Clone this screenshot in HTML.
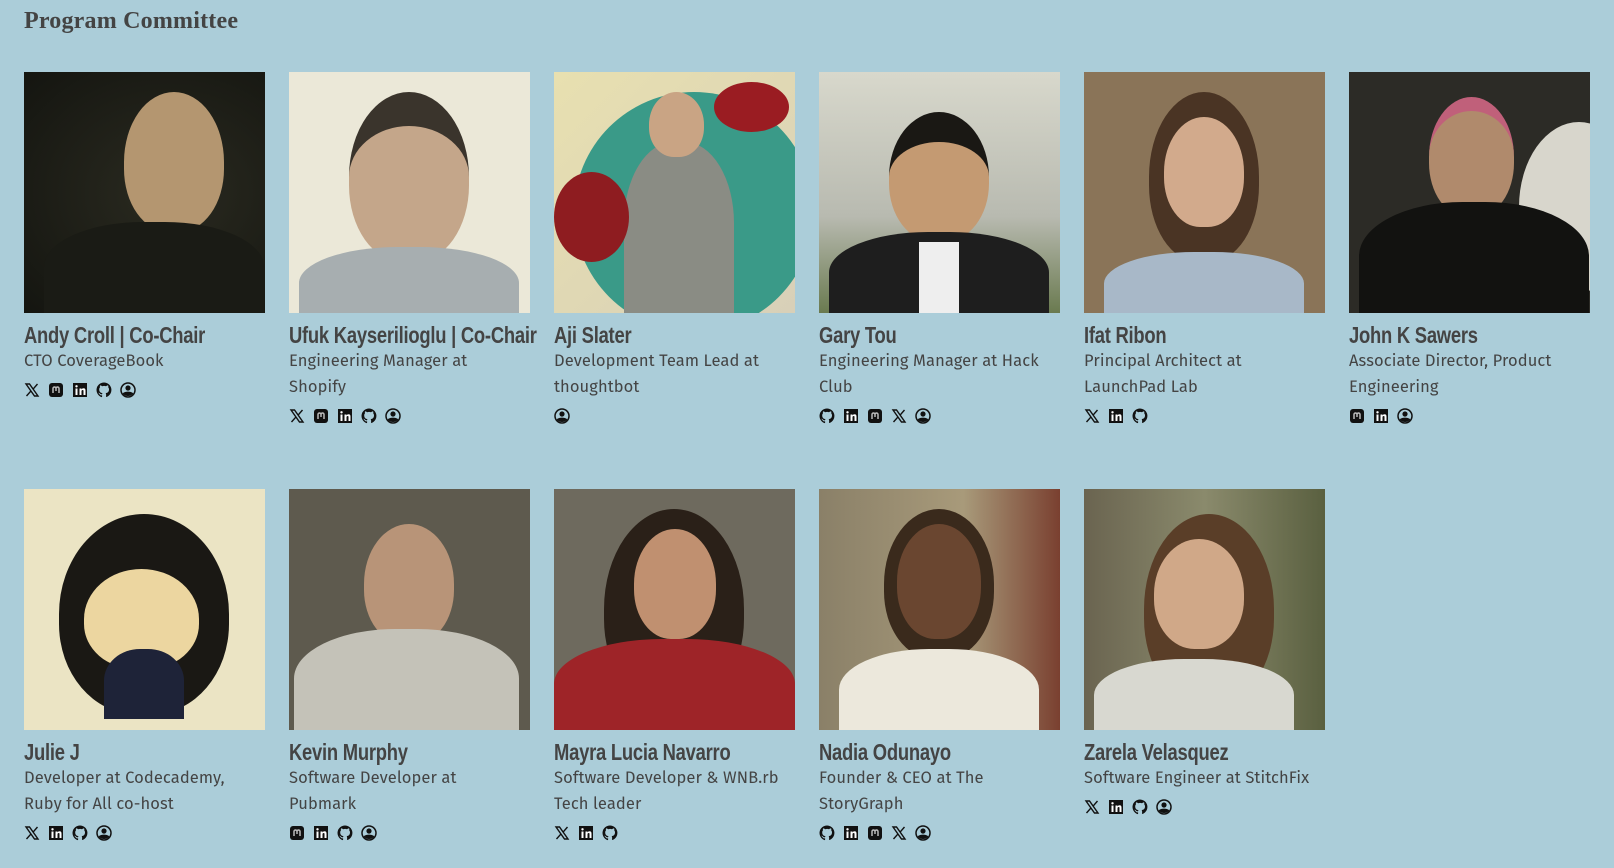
<!DOCTYPE html>
<html><head><meta charset="utf-8"><style>
*{margin:0;padding:0;box-sizing:border-box}
body{width:1614px;height:868px;background:#abcdd9;color:#444;font-family:"Fira Sans","DejaVu Sans","Liberation Sans",sans-serif;overflow:hidden;position:relative}
h2{position:absolute;left:24px;top:8px;font-family:"Liberation Serif",serif;font-weight:bold;font-size:24px;color:#444;letter-spacing:0.2px}
.card{position:absolute;width:245px}
.ph{width:241px;height:241px;position:relative;overflow:hidden}
.nm{font-family:"Liberation Sans Narrow","Liberation Sans",sans-serif;font-stretch:condensed;font-weight:bold;font-size:23px;line-height:26px;margin-top:9px;letter-spacing:-0.3px;transform:scaleX(.8);transform-origin:left;white-space:nowrap}
.ds{font-size:16.5px;line-height:26px;margin-top:1px;letter-spacing:.1px}
.ic{display:flex;gap:8px;margin-top:6px;height:18px;align-items:center}
.ic svg{width:16px;height:16px}
.face{position:absolute;border-radius:50% 50% 45% 45%}
.body{position:absolute;border-radius:45% 45% 0 0}
</style></head><body>
<svg width="0" height="0" style="position:absolute">
<defs>
<symbol id="x" viewBox="0 0 16 16"><path d="M2 2h3.5l8.5 12h-3.5z" fill="none" stroke="#111" stroke-width="1.4"/><path d="M13.5 2L9 7.2M2.5 14l4.6-5.2" stroke="#111" stroke-width="1.4"/></symbol>
<symbol id="m" viewBox="0 0 16 16"><rect x="1" y="1" width="14" height="14" rx="3" fill="#111"/><path d="M5 11V6.5a1.5 1.5 0 013 0V9M8 9V6.5a1.5 1.5 0 013 0V11" fill="none" stroke="#bbb" stroke-width="1.5"/></symbol>
<symbol id="l" viewBox="0 0 16 16"><rect x="1" y="1" width="14" height="14" fill="#111"/><rect x="3.5" y="6.5" width="2" height="6.5" fill="#fff"/><circle cx="4.5" cy="4.3" r="1.2" fill="#fff"/><path d="M7.5 13V6.5h2v1c.5-.8 1.3-1.2 2.2-1.2 1.2 0 1.8.8 1.8 2.3V13h-2V9c0-.7-.3-1-.8-1s-1.2.4-1.2 1.2V13z" fill="#fff"/></symbol>
<symbol id="g" viewBox="0 0 16 16"><path d="M8 .5a7.5 7.5 0 00-2.4 14.6c.4 0 .5-.2.5-.4v-1.4c-2.1.5-2.5-1-2.5-1-.4-.9-.9-1.1-.9-1.1-.7-.5 0-.5 0-.5.8 0 1.2.8 1.2.8.7 1.2 1.8.8 2.2.6 0-.5.3-.8.5-1-1.700-.2-3.4-.8-3.4-3.7 0-.8.3-1.5.8-2-.1-.2-.3-1 .1-2 0 0 .6-.2 2.1.8a7 7 0 013.8 0c1.4-1 2.1-.8 2.1-.8.4 1 .2 1.8.1 2 .5.5.8 1.2.8 2 0 2.9-1.8 3.5-3.4 3.7.3.2.5.7.5 1.4v2.1c0 .2.1.5.5.4A7.5 7.5 0 008 .5z" fill="#111"/></symbol>
<symbol id="p" viewBox="0 0 16 16"><circle cx="8" cy="8" r="7" fill="none" stroke="#111" stroke-width="1.5"/><circle cx="8" cy="6" r="2.6" fill="#111"/><path d="M2.6 11.5C4 10 6 9.6 8 9.6s4 .4 5.4 1.9A7 7 0 012.6 11.5z" fill="#111"/></symbol>
</defs></svg>
<h2>Program Committee</h2>

<div class="card" style="left:24px;top:72px">
<div class="ph" style="background:radial-gradient(ellipse at 60% 50%,#2a2a20,#141510)"><div class="face" style="left:100px;top:20px;width:100px;height:140px;background:#b49670"></div><div class="body" style="left:20px;top:150px;width:220px;height:100px;background:#1a1b15"></div></div>
<div class="nm">Andy Croll | Co-Chair</div><div class="ds">CTO CoverageBook</div>
<div class="ic"><svg><use href="#x"/></svg><svg><use href="#m"/></svg><svg><use href="#l"/></svg><svg><use href="#g"/></svg><svg><use href="#p"/></svg></div></div>

<div class="card" style="left:289px;top:72px">
<div class="ph" style="background:#ebe8d8"><div class="face" style="left:60px;top:20px;width:120px;height:170px;background:#c4a68a;border-top:34px solid #3a342c"></div><div class="body" style="left:10px;top:175px;width:220px;height:80px;background:#a7aeb0"></div></div>
<div class="nm">Ufuk Kayserilioglu | Co-Chair</div><div class="ds">Engineering Manager at<br>Shopify</div>
<div class="ic"><svg><use href="#x"/></svg><svg><use href="#m"/></svg><svg><use href="#l"/></svg><svg><use href="#g"/></svg><svg><use href="#p"/></svg></div></div>

<div class="card" style="left:554px;top:72px">
<div class="ph" style="background:linear-gradient(135deg,#e8e0b0,#d8d0b8)"><div style="position:absolute;left:20px;top:20px;width:240px;height:240px;border-radius:50%;background:#3a9a88"></div><div class="body" style="left:70px;top:70px;width:110px;height:180px;background:#8a8c84"></div><div class="face" style="left:95px;top:20px;width:55px;height:65px;background:#c9a484"></div><div style="position:absolute;left:0;top:100px;width:75px;height:90px;border-radius:50%;background:#8e1c20"></div><div style="position:absolute;left:160px;top:10px;width:75px;height:50px;border-radius:50%;background:#9a1c22"></div></div>
<div class="nm">Aji Slater</div><div class="ds">Development Team Lead at<br>thoughtbot</div>
<div class="ic"><svg><use href="#p"/></svg></div></div>

<div class="card" style="left:819px;top:72px">
<div class="ph" style="background:linear-gradient(#d8d8cc,#b8bab0 60%,#6a7a50)"><div class="face" style="left:70px;top:40px;width:100px;height:130px;background:#c49a72;border-top:30px solid #1a1814"></div><div class="body" style="left:10px;top:160px;width:220px;height:90px;background:#1e1e1e"></div><div style="position:absolute;left:100px;top:170px;width:40px;height:80px;background:#eee"></div></div>
<div class="nm">Gary Tou</div><div class="ds">Engineering Manager at Hack<br>Club</div>
<div class="ic"><svg><use href="#g"/></svg><svg><use href="#l"/></svg><svg><use href="#m"/></svg><svg><use href="#x"/></svg><svg><use href="#p"/></svg></div></div>

<div class="card" style="left:1084px;top:72px">
<div class="ph" style="background:#8a7458"><div class="face" style="left:65px;top:20px;width:110px;height:170px;background:#4a3424"></div><div class="face" style="left:80px;top:45px;width:80px;height:110px;background:#d2aa8c"></div><div class="body" style="left:20px;top:180px;width:200px;height:70px;background:#a8b8c8"></div></div>
<div class="nm">Ifat Ribon</div><div class="ds">Principal Architect at<br>LaunchPad Lab</div>
<div class="ic"><svg><use href="#x"/></svg><svg><use href="#l"/></svg><svg><use href="#g"/></svg></div></div>

<div class="card" style="left:1349px;top:72px">
<div class="ph" style="background:#2c2b26"><div style="position:absolute;left:170px;top:50px;width:120px;height:170px;border-radius:50%;background:#d8d6cc"></div><div class="face" style="left:80px;top:25px;width:85px;height:120px;background:#b08a6c;border-top:14px solid #c0607a"></div><div class="body" style="left:10px;top:130px;width:230px;height:120px;background:#121210"></div></div>
<div class="nm">John K Sawers</div><div class="ds">Associate Director, Product<br>Engineering</div>
<div class="ic"><svg><use href="#m"/></svg><svg><use href="#l"/></svg><svg><use href="#p"/></svg></div></div>

<div class="card" style="left:24px;top:489px">
<div class="ph" style="background:#ebe4c4"><div class="face" style="left:35px;top:25px;width:170px;height:200px;background:#1a1814"></div><div class="face" style="left:60px;top:80px;width:115px;height:100px;background:#ecd6a0"></div><div class="body" style="left:80px;top:160px;width:80px;height:70px;background:#1e2338"></div></div>
<div class="nm">Julie J</div><div class="ds">Developer at Codecademy,<br>Ruby for All co-host</div>
<div class="ic"><svg><use href="#x"/></svg><svg><use href="#l"/></svg><svg><use href="#g"/></svg><svg><use href="#p"/></svg></div></div>

<div class="card" style="left:289px;top:489px">
<div class="ph" style="background:#5e5a4e"><div class="face" style="left:75px;top:35px;width:90px;height:120px;background:#b89478"></div><div class="body" style="left:5px;top:140px;width:225px;height:110px;background:#c4c2b8"></div></div>
<div class="nm">Kevin Murphy</div><div class="ds">Software Developer at<br>Pubmark</div>
<div class="ic"><svg><use href="#m"/></svg><svg><use href="#l"/></svg><svg><use href="#g"/></svg><svg><use href="#p"/></svg></div></div>

<div class="card" style="left:554px;top:489px">
<div class="ph" style="background:#6e6a5e"><div class="face" style="left:50px;top:20px;width:140px;height:200px;background:#2a2018"></div><div class="face" style="left:80px;top:40px;width:82px;height:110px;background:#c09070"></div><div class="body" style="left:0;top:150px;width:241px;height:100px;background:#9e2428"></div></div>
<div class="nm">Mayra Lucia Navarro</div><div class="ds">Software Developer &amp; WNB.rb<br>Tech leader</div>
<div class="ic"><svg><use href="#x"/></svg><svg><use href="#l"/></svg><svg><use href="#g"/></svg></div></div>

<div class="card" style="left:819px;top:489px">
<div class="ph" style="background:linear-gradient(90deg,#8a8068,#a89a7a 60%,#7a4030)"><div class="face" style="left:65px;top:20px;width:110px;height:150px;background:#3a2a1c"></div><div class="face" style="left:78px;top:35px;width:84px;height:115px;background:#6a4630"></div><div class="body" style="left:20px;top:160px;width:200px;height:90px;background:#ece8dc"></div></div>
<div class="nm">Nadia Odunayo</div><div class="ds">Founder &amp; CEO at The<br>StoryGraph</div>
<div class="ic"><svg><use href="#g"/></svg><svg><use href="#l"/></svg><svg><use href="#m"/></svg><svg><use href="#x"/></svg><svg><use href="#p"/></svg></div></div>

<div class="card" style="left:1084px;top:489px">
<div class="ph" style="background:linear-gradient(90deg,#6a6450,#8a8a6c 50%,#5a6040)"><div class="face" style="left:60px;top:25px;width:130px;height:190px;background:#5a3e28"></div><div class="face" style="left:70px;top:50px;width:90px;height:110px;background:#d0a888"></div><div class="body" style="left:10px;top:170px;width:200px;height:80px;background:#d8d8d0"></div></div>
<div class="nm">Zarela Velasquez</div><div class="ds">Software Engineer at StitchFix</div>
<div class="ic"><svg><use href="#x"/></svg><svg><use href="#l"/></svg><svg><use href="#g"/></svg><svg><use href="#p"/></svg></div></div>
</body></html>
